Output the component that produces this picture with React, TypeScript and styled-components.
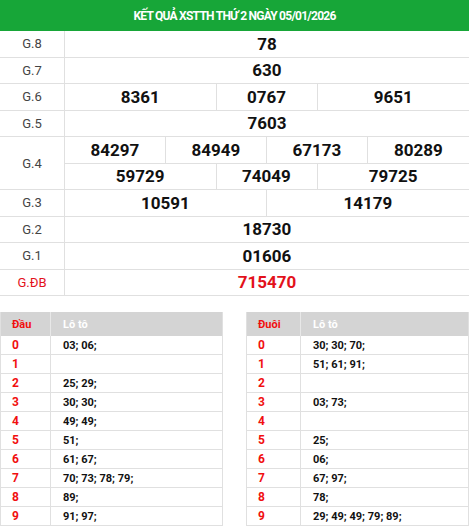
import React from "react";
import styled, { createGlobalStyle } from "styled-components";

const Global = createGlobalStyle`
  html, body { margin: 0; padding: 0; background: #fff; }
  body { font-family: Roboto, "Liberation Sans", Arial, sans-serif; }
`;

const Page = styled.div`
  width: 469px;
  display: flex;
  flex-direction: column;
`;

const Title = styled.div`
  height: 31px;
  background: #17a638;
  color: #fff;
  font-weight: 700;
  font-size: 12px;
  letter-spacing: -0.75px;
  display: flex;
  align-items: center;
  justify-content: center;
`;

const Board = styled.div`
  display: grid;
  grid-template-columns: 65px repeat(8, 1fr);
  grid-auto-rows: 26.5px;
`;

const Label = styled.div<{ $red?: boolean; $rows?: number }>`
  grid-column: 1;
  grid-row: span ${(p) => p.$rows ?? 1};
  border-right: 1px solid #e0e0e0;
  border-bottom: 1px solid #e0e0e0;
  display: flex;
  align-items: center;
  justify-content: center;
  font-size: 13px;
  color: ${(p) => (p.$red ? "#e3111b" : "#444")};
`;

const Num = styled.div<{ $span: number; $red?: boolean; $last?: boolean }>`
  grid-column: span ${(p) => p.$span};
  border-bottom: 1px solid #e0e0e0;
  border-right: ${(p) => (p.$last ? "none" : "1px solid #e0e0e0")};
  display: flex;
  align-items: center;
  justify-content: center;
  font-size: 17px;
  font-weight: 700;
  color: ${(p) => (p.$red ? "#e3111b" : "#111")};
`;

const Lower = styled.div`
  margin-top: 16px;
  display: flex;
  gap: 23px;
`;

const LotoTable = styled.div<{ $first: number }>`
  width: 223px;
  display: grid;
  grid-template-columns: ${(p) => p.$first}px 1fr;
  grid-template-rows: 24px;
  grid-auto-rows: 19px;
  border-left: 1px solid #e0e0e0;
  border-right: 1px solid #e0e0e0;
  box-sizing: border-box;
  font-family: Roboto, "Liberation Sans", Arial, sans-serif;
  font-weight: 700;
  font-size: 11px;
`;

const HeadCell = styled.div<{ $red?: boolean }>`
  background: #d4d4d4;
  color: ${(p) => (p.$red ? "#f10f0f" : "#fff")};
  display: flex;
  align-items: center;
  padding-left: ${(p) => (p.$red ? "11px" : "12px")};
  border-left: ${(p) => (p.$red ? "none" : "1px solid #e8e8e8")};
`;

const DigitCell = styled.div`
  color: #f10f0f;
  display: flex;
  align-items: center;
  padding-left: 11px;
  font-size: 12px;
  border-bottom: 1px solid #e0e0e0;
`;

const ListCell = styled.div`
  color: #111;
  display: flex;
  align-items: center;
  padding-left: 12px;
  border-left: 1px solid #e0e0e0;
  border-bottom: 1px solid #e0e0e0;
`;

const dau = ["03; 06;", "", "25; 29;", "30; 30;", "49; 49;", "51;", "61; 67;", "70; 73; 78; 79;", "89;", "91; 97;"];
const duoi = ["30; 30; 70;", "51; 61; 91;", "", "03; 73;", "", "25;", "06;", "67; 97;", "78;", "29; 49; 49; 79; 89;"];

function Loto({ head, first, items }: { head: string; first: number; items: string[] }) {
  return (
    <LotoTable $first={first}>
      <HeadCell $red>{head}</HeadCell>
      <HeadCell>Lô tô</HeadCell>
      {items.map((v, i) => (
        <React.Fragment key={i}>
          <DigitCell>{i}</DigitCell>
          <ListCell>{v}</ListCell>
        </React.Fragment>
      ))}
    </LotoTable>
  );
}

export default function App() {
  return (
    <Page>
      <Global />
      <Title>KẾT QUẢ XSTTH THỨ 2 NGÀY 05/01/2026</Title>
      <Board>
        <Label>G.8</Label>
        <Num $span={8} $last>78</Num>
        <Label>G.7</Label>
        <Num $span={8} $last>630</Num>
        <Label>G.6</Label>
        <Num $span={3}>8361</Num>
        <Num $span={2}>0767</Num>
        <Num $span={3} $last>9651</Num>
        <Label>G.5</Label>
        <Num $span={8} $last>7603</Num>
        <Label $rows={2}>G.4</Label>
        <Num $span={2}>84297</Num>
        <Num $span={2}>84949</Num>
        <Num $span={2}>67173</Num>
        <Num $span={2} $last>80289</Num>
        <Num $span={3}>59729</Num>
        <Num $span={2}>74049</Num>
        <Num $span={3} $last>79725</Num>
        <Label>G.3</Label>
        <Num $span={4}>10591</Num>
        <Num $span={4} $last>14179</Num>
        <Label>G.2</Label>
        <Num $span={8} $last>18730</Num>
        <Label>G.1</Label>
        <Num $span={8} $last>01606</Num>
        <Label $red>G.ĐB</Label>
        <Num $span={8} $red $last>715470</Num>
      </Board>
      <Lower>
        <Loto head="Đầu" first={49} items={dau} />
        <Loto head="Đuôi" first={53} items={duoi} />
      </Lower>
    </Page>
  );
}
